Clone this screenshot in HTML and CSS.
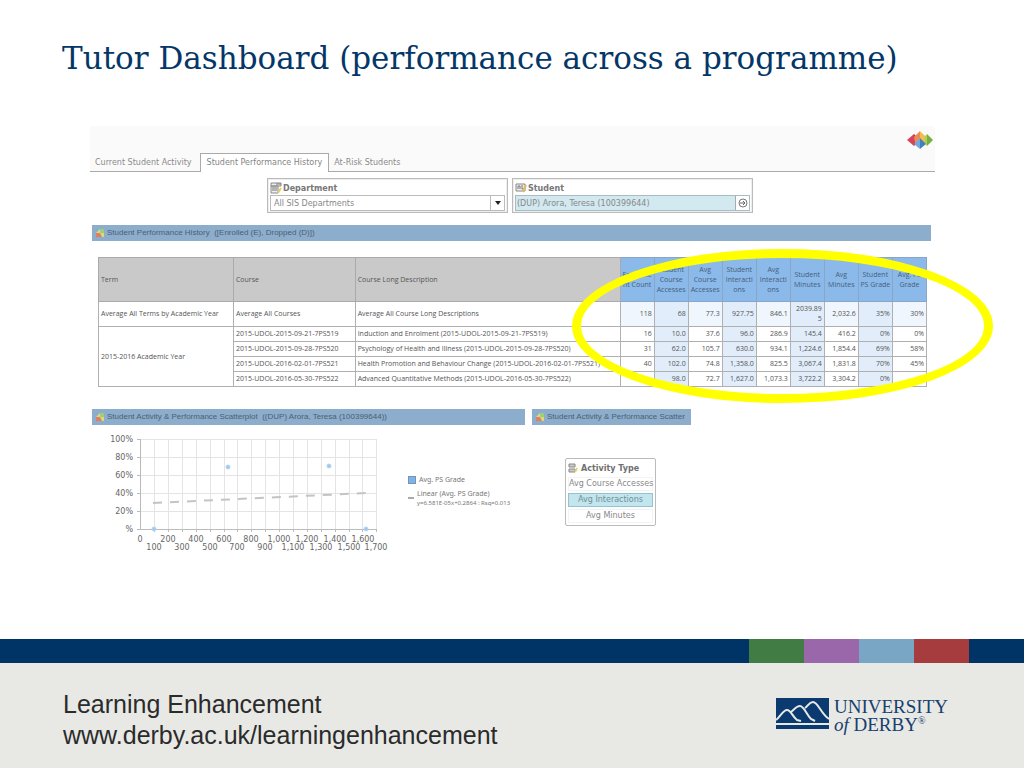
FILE: index.html
```html
<!DOCTYPE html>
<html lang="en">
<head>
<meta charset="utf-8">
<title>Tutor Dashboard</title>
<link rel="stylesheet" href="styles.css">
</head>
<body class="slide">
<main class="slide-main">
  <h1 class="slide-title">Tutor Dashboard (performance across a programme)</h1>
  <div class="dashboard">
    <header class="dash-header">
      <nav class="tabs">
        <a class="tab" href="#activity">Current Student Activity</a>
        <a class="tab tab-active" href="#history">Student Performance History</a>
        <a class="tab" href="#risk">At-Risk Students</a>
      </nav>
      <svg class="brand" viewBox="0 0 26 18" width="26" height="18" aria-hidden="true">
        <path d="M0 9L7 3V15Z" fill="#d8435c"/><path d="M7 3L9 5V13L7 15Z" fill="#c0304a"/>
        <path d="M7 6L13 0V10L8 13Z" fill="#f08a55"/><path d="M13 0L19 6V12L13 10Z" fill="#f5bd4c"/>
        <path d="M18 5L20 3V15L17 12Z" fill="#b2cf55"/><path d="M20 3L26 9L20 15Z" fill="#79b043"/>
        <path d="M7 13L13 7V18Z" fill="#73a9da"/><path d="M13 7L19 13L13 18Z" fill="#477fbd"/>
      </svg>
    </header>

    <div class="filters">
      <div class="filter">
        <label class="filter-label" for="department">
          <svg viewBox="0 0 12 12" width="12" height="12" aria-hidden="true"><path d="M1 1H11V4H1ZM1 4H8V11H1Z" fill="#eee" stroke="#888"/><path d="M6 2H11M2 6H7M2 8H7" stroke="#777"/><path d="M8 11L11 6" stroke="#e5cf68" stroke-width="2"/></svg>
          Department</label>
        <div class="control">
          <select id="department" class="field"><option>All SIS Departments</option></select>
          <span class="arrow"><svg viewBox="0 0 6 4" width="6" height="4" aria-hidden="true"><path d="M0 0H6L3 4Z" fill="#222"/></svg></span>
        </div>
      </div>
      <div class="filter">
        <label class="filter-label" for="student">
          <svg viewBox="0 0 12 12" width="12" height="12" aria-hidden="true"><path d="M1 2H10V9H1Z" fill="#eee" stroke="#888"/><path d="M3 7V4H5V7M7 3V7H9" fill="none" stroke="#777"/><path d="M8 10L11 3" stroke="#e5b968" stroke-width="2"/></svg>
          Student</label>
        <div class="control control-selected">
          <input id="student" class="field" type="text" value="(DUP) Arora, Teresa (100399644)">
          <button class="go" type="button" aria-label="Go"><svg viewBox="0 0 10 10" width="10" height="10" aria-hidden="true"><circle cx="5" cy="5" r="4" fill="none" stroke="#777"/><path d="M2 5H7M5 3L7 5L5 7" fill="none" stroke="#666"/></svg></button>
        </div>
      </div>
    </div>

    <h2 class="bar"><svg class="bar-icon" viewBox="0 0 8 8" width="8" height="8" aria-hidden="true"><path d="M0 4L4 0H8V8H0Z" fill="#d9dc7c"/><path d="M4 0H8V4H4Z" fill="#9ccf7a"/><path d="M0 4H4L6 8H0Z" fill="#e27d62"/></svg>Student Performance History&nbsp; ([Enrolled (E), Dropped (D)])</h2>

    <div class="table-wrap">
      <table class="grades">
        <colgroup><col class="c-term"><col class="c-course"><col class="c-desc"><col span="9"></colgroup>
        <thead>
          <tr><th>Term</th><th>Course</th><th>Course Long Description</th><th>Enrollme<br>nt Count</th><th>Student Course Accesses</th><th>Avg Course Accesses</th><th>Student Interacti<br>ons</th><th>Avg Interacti<br>ons</th><th>Student Minutes</th><th>Avg Minutes</th><th>Student PS Grade</th><th>Avg. PS Grade</th></tr>
        </thead>
        <tbody>
          <tr class="average"><td>Average All Terms by Academic Year</td><td>Average All Courses</td><td>Average All Course Long Descriptions</td><td>118</td><td class="s">68</td><td>77.3</td><td class="s">927.75</td><td>846.1</td><td class="s">2039.89<br>5</td><td>2,032.6</td><td class="s">35%</td><td>30%</td></tr>
          <tr><td rowspan="4">2015-2016 Academic Year</td><td>2015-UDOL-2015-09-21-7PS519</td><td>Induction and Enrolment (2015-UDOL-2015-09-21-7PS519)</td><td>16</td><td class="s">10.0</td><td>37.6</td><td class="s">96.0</td><td>286.9</td><td class="s">145.4</td><td>416.2</td><td class="s">0%</td><td>0%</td></tr>
          <tr><td>2015-UDOL-2015-09-28-7PS520</td><td>Psychology of Health and Illness (2015-UDOL-2015-09-28-7PS520)</td><td>31</td><td class="s">62.0</td><td>105.7</td><td class="s">630.0</td><td>934.1</td><td class="s">1,224.6</td><td>1,854.4</td><td class="s">69%</td><td>58%</td></tr>
          <tr><td>2015-UDOL-2016-02-01-7PS521</td><td>Health Promotion and Behaviour Change (2015-UDOL-2016-02-01-7PS521)</td><td>40</td><td class="s">102.0</td><td>74.8</td><td class="s">1,358.0</td><td>825.5</td><td class="s">3,067.4</td><td>1,831.8</td><td class="s">70%</td><td>45%</td></tr>
          <tr><td>2015-UDOL-2016-05-30-7PS522</td><td>Advanced Quantitative Methods (2015-UDOL-2016-05-30-7PS522)</td><td></td><td class="s">98.0</td><td>72.7</td><td class="s">1,627.0</td><td>1,073.3</td><td class="s">3,722.2</td><td>3,304.2</td><td class="s">0%</td><td></td></tr>
        </tbody>
      </table>
      <div class="highlight" aria-hidden="true"></div>
    </div>

    <div class="panels">
      <section class="panel-chart">
        <h2 class="bar"><svg class="bar-icon" viewBox="0 0 8 8" width="8" height="8" aria-hidden="true"><path d="M0 4L4 0H8V8H0Z" fill="#d9dc7c"/><path d="M4 0H8V4H4Z" fill="#9ccf7a"/><path d="M0 4H4L6 8H0Z" fill="#e27d62"/></svg>Student Activity &amp; Performance Scatterplot&nbsp; ((DUP) Arora, Teresa (100399644))</h2>
        <div class="chart-row">
          <svg class="chart" viewBox="0 0 304 130" width="304" height="130" role="img" aria-label="Scatterplot of grade against interactions">
            <path class="grid" d="M62 14V104M76 14V104M90 14V104M104 14V104M118 14V104M132 14V104M145 14V104M159 14V104M173 14V104M187 14V104M201 14V104M215 14V104M229 14V104M243 14V104M257 14V104M270 14V104M284 14V104M48 14H284M48 32H284M48 50H284M48 68H284M48 86H284"/>
            <path class="axis" d="M48 14V104H285M45 14H48M45 32H48M45 50H48M45 68H48M45 86H48M45 104H48M62 104V107M76 104V107M90 104V107M104 104V107M118 104V107M132 104V107M145 104V107M159 104V107M173 104V107M187 104V107M201 104V107M215 104V107M229 104V107M243 104V107M257 104V107M270 104V107M284 104V107"/>
            <path class="trend" d="M61 78L275 68"/>
            <g class="dots"><circle cx="62" cy="104" r="2"/><circle cx="136" cy="42" r="2"/><circle cx="237" cy="41" r="2"/><circle cx="274" cy="104" r="2"/></g>
            <g class="y-labels"><text x="41" y="17">100%</text><text x="41" y="35">80%</text><text x="41" y="53">60%</text><text x="41" y="71">40%</text><text x="41" y="89">20%</text><text x="41" y="107">%</text></g>
            <g class="x-labels"><text x="48" y="117">0</text><text x="76" y="117">200</text><text x="104" y="117">400</text><text x="132" y="117">600</text><text x="159" y="117">800</text><text x="187" y="117">1,000</text><text x="215" y="117">1,200</text><text x="243" y="117">1,400</text><text x="271" y="117">1,600</text><text x="62" y="125">100</text><text x="90" y="125">300</text><text x="118" y="125">500</text><text x="145" y="125">700</text><text x="173" y="125">900</text><text x="201" y="125">1,100</text><text x="229" y="125">1,300</text><text x="257" y="125">1,500</text><text x="284" y="125">1,700</text></g>
          </svg>
          <ul class="legend">
            <li><span class="swatch"></span>Avg. PS Grade</li>
            <li><span class="dash"></span><span>Linear (Avg. PS Grade)<small>y=6.581E-05x+0.2864 : Rsq=0.013</small></span></li>
          </ul>
        </div>
      </section>
      <section class="panel-type">
        <h2 class="bar"><svg class="bar-icon" viewBox="0 0 8 8" width="8" height="8" aria-hidden="true"><path d="M0 4L4 0H8V8H0Z" fill="#d9dc7c"/><path d="M4 0H8V4H4Z" fill="#9ccf7a"/><path d="M0 4H4L6 8H0Z" fill="#e27d62"/></svg><span class="clip">Student Activity &amp; Performance Scatterplot</span></h2>
        <div class="types">
          <h3 class="types-title"><svg viewBox="0 0 10 10" width="10" height="10" aria-hidden="true"><path d="M1 1H7V4H1ZM1 6H7V9H1Z" fill="#ccc" stroke="#888"/><path d="M7 9L9 5" stroke="#e5cf68" stroke-width="2"/></svg>Activity Type</h3>
          <button class="type" type="button">Avg Course Accesses</button>
          <button class="type type-on" type="button">Avg Interactions</button>
          <button class="type" type="button">Avg Minutes</button>
        </div>
      </section>
    </div>
  </div>
</main>

<footer>
  <div class="stripe"><i class="green"></i><i class="purple"></i><i class="sky"></i><i class="red"></i></div>
  <div class="footer-body">
    <p class="contact">Learning Enhancement<br><a href="https://www.derby.ac.uk/learningenhancement">www.derby.ac.uk/learningenhancement</a></p>
    <div class="logo">
      <svg viewBox="0 0 53 31" width="53" height="31" aria-hidden="true">
        <rect width="53" height="31" fill="#0b3a70"/>
        <path d="M0 22C4 19 7 12 11 12C15 12 16 18 21 22L25 23M15 14C18 12 20 8 24 8C28 8 30 16 35 21L39 23M29 10C32 8 33 4 37 4C42 4 45 16 53 21" fill="none" stroke="#e8e9e5" stroke-width="2"/>
        <path d="M0 26H53" stroke="#e8e9e5" stroke-width="2"/>
      </svg>
      <p class="logo-text">UNIVERSITY<br><em>of</em> DERBY<sup>®</sup></p>
    </div>
  </div>
</footer>
</body>
</html>
```
FILE: styles.css
```css
* { box-sizing: border-box; }
body, h1, h2, h3, p, ul { margin: 0; padding: 0; }
.slide { min-height: 100vh; display: flex; flex-direction: column; background: #fff; font-family: "DejaVu Sans", sans-serif; overflow-x: hidden; }
.slide-main { flex: 1; padding: 36px 62px 0; }
.slide-title { font: 400 31px/44px "DejaVu Serif", serif; color: #043768; white-space: nowrap; }
.dashboard { margin: 46px 27px 0 28px; font-size: 8px; color: #777; }

.dash-header { height: 46px; display: flex; justify-content: space-between; align-items: flex-end; background: #fafafa; border-bottom: 1px solid #aaa; border-radius: 3px 3px 0 0; }
.tabs { display: flex; margin-bottom: -1px; line-height: 18px; }
.tab { padding: 0 5px 0 4px; height: 19px; color: #8a8a8a; text-decoration: none; border: 1px solid transparent; border-bottom: 0; white-space: nowrap; }
.tab-active { padding: 0 6px; margin-left: 2px; background: #fff; border-color: #aaa; color: #858585; }
.brand { align-self: flex-start; margin: 5px 2px 0 0; }

.filters { display: flex; justify-content: center; gap: 4px; margin: 6px 5px 0 0; }
.filter { width: 241px; height: 35px; padding: 2px; border: 1px solid #bbb; box-shadow: inset 0 0 0 1px #eee; }
.filter-label { display: flex; align-items: center; gap: 1px; height: 14px; font-weight: 700; color: #777; }
.control { display: flex; height: 16px; border: 1px solid #bbb; background: #fff; }
.field { flex: 1; min-width: 0; border: 0; padding: 0 3px; margin: 0; background: none; appearance: none; font: inherit; font-size: 8px; color: #888; }
.arrow { width: 14px; display: flex; align-items: center; justify-content: center; border-left: 1px solid #bbb; }
.control-selected { background: #d2e9f0; border-color: #a8bcc3; }
.control-selected .field { padding: 0 1px; }
.go { width: 14px; padding: 0; border: 0; border-left: 1px solid #aaa; background: #fff; display: flex; align-items: center; justify-content: center; }

.bar { display: flex; align-items: center; height: 16px; padding: 0 6px 0 4px; background: #8cadcc; color: #4c6072; font: 400 8px/16px "Liberation Sans", sans-serif; white-space: nowrap; overflow: hidden; }
.bar-icon { flex: none; margin-right: 3px; }
.clip { flex: 1; overflow: hidden; }
.dashboard > .bar { margin: 12px 4px 0 2px; }

.table-wrap { position: relative; margin: 16px 8px 0 8px; }
.grades { width: 100%; table-layout: fixed; border-collapse: collapse; font: 7px/8px "Open Sans", sans-serif; color: #555; }
.c-term { width: 16.3%; }
.c-course { width: 14.7%; }
.c-desc { width: 32%; }
.grades th, .grades td { border: 1px solid #b0b0b0; padding: 0 2px; height: 15px; text-align: right; white-space: nowrap; }
.grades th { height: 44px; background: #8bb9e9; color: #46607c; font-weight: 400; line-height: 10px; padding: 0; text-align: center; white-space: normal; border-color: #8aa6c6; }
.grades th:nth-child(-n+3) { background: #c9c9c9; color: #555; padding: 0 2px; text-align: left; border-color: #aaa; }
.grades .average td { height: 25px; line-height: 10px; }
.grades .average td:nth-child(n+4) { background: #f0f6fe; }
.grades td:first-child, .average td:nth-child(-n+3), .grades td:not(.s):nth-last-child(n+10) { text-align: left; }
.grades td.s, .grades .average td.s { background: #e1edfa; }
.highlight { position: absolute; top: -8px; right: -66px; width: 421px; height: 154px; border: 9px solid #ff0; border-radius: 50%; pointer-events: none; }

.panels { display: flex; gap: 7px; margin: 22px 244px 0 2px; }
.panel-chart { flex: 1; }
.panel-type { width: 159px; }
.chart-row { display: flex; gap: 12px; }
.chart { flex: none; font-size: 8px; fill: #666; }
.grid { fill: none; stroke: #e4e4e4; shape-rendering: crispEdges; }
.axis { fill: none; stroke: #bbb; shape-rendering: crispEdges; }
.trend { fill: none; stroke: #c4c4c4; stroke-width: 2; stroke-dasharray: 9 8; }
.dots { fill: #9fc8ee; stroke: #b3d5f3; }
.y-labels { text-anchor: end; }
.x-labels { text-anchor: middle; }
.legend { list-style: none; padding-top: 50px; font: 7px/10px "Noto Sans", sans-serif; color: #777; white-space: nowrap; }
.legend li { display: flex; gap: 3px; margin-bottom: 4px; }
.legend small { display: block; font-size: 6px; line-height: 8px; }
.swatch { width: 8px; height: 8px; margin-top: 1px; background: #84b1e0; border: 1px solid #6d95bf; }
.dash { width: 6px; height: 2px; margin-top: 8px; background: #aaa; }
.types { width: 91px; height: 68px; margin: 33px 0 0 33px; padding: 2px; border: 1px solid #bbb; border-radius: 2px; display: flex; flex-direction: column; gap: 2px; }
.types-title { display: flex; align-items: center; gap: 3px; height: 14px; font-size: 8px; color: #707070; }
.type { height: 14px; padding: 0; border: 1px solid #f3f3f3; background: #fff; font: 8px/10px "DejaVu Sans", sans-serif; color: #888; white-space: nowrap; }
.type-on { background: #c2e5ee; border-color: #92c3d2; color: #6e9099; }

.stripe { display: flex; justify-content: flex-end; height: 24px; padding-right: 55px; background: #003466; }
.stripe i { width: 55px; }
.green { background: #417c45; }
.purple { background: #9a67aa; }
.sky { background: #7aa6c6; }
.red { background: #a63c3d; }
.footer-body { display: flex; justify-content: space-between; align-items: flex-start; height: 105px; padding: 26px 76px 0 63px; background: #e8e9e5; }
.contact { font: 25px/31px "Liberation Sans", sans-serif; color: #2b2b2b; }
.contact a { color: inherit; text-decoration: none; }
.logo { display: flex; gap: 5px; padding-top: 9px; }
.logo-text { font: 19px/18px "Liberation Serif", serif; color: #17406f; }
.logo-text sup { font-size: 10px; line-height: 0; }
```
